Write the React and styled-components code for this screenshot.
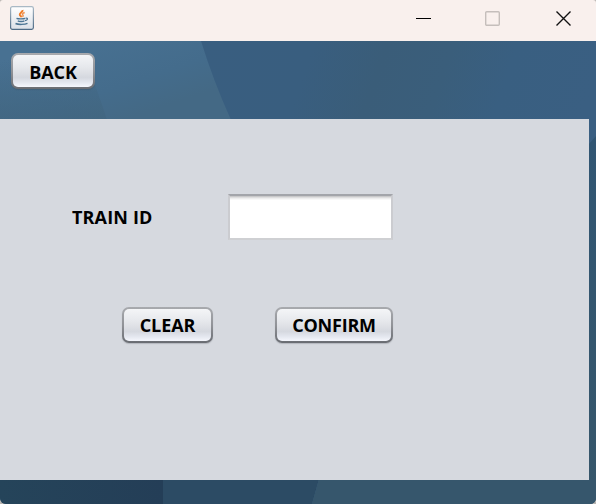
import React from 'react';
import styled, { createGlobalStyle } from 'styled-components';

const GlobalStyle = createGlobalStyle`
  html, body { margin: 0; overflow: hidden; background: #b9b6b2; }
  * { box-sizing: border-box; }
`;

const Window = styled.div`
  width: 596px;
  height: 504px;
  display: flex;
  flex-direction: column;
  overflow: hidden;
  border-radius: 3px 3px 6px 6px;
  font-family: 'Open Sans', 'Noto Sans', sans-serif;
  color: #000;
`;

const TitleBar = styled.header`
  height: 41px;
  flex: none;
  display: flex;
  justify-content: space-between;
  padding: 6px 24px 0 10px;
  background: #f9f0ed;
`;

const Controls = styled.div`
  display: grid;
  grid-template-columns: 69px 71px 16px;
  padding-top: 4px;
  svg { display: block; }
`;

const Desktop = styled.main`
  position: relative;
  flex: 1;
  display: flex;
  flex-direction: column;
  isolation: isolate;
`;

const Backdrop = styled.svg`
  position: absolute;
  inset: 0;
  z-index: -1;
`;

const Toolbar = styled.div`
  height: 78px;
  flex: none;
  padding: 12px 0 0 11px;
`;

const Panel = styled.section`
  width: 589px;
  height: 361px;
  padding: 75px 0 0 72px;
  background: #d6d9df;
`;

const FieldRow = styled.label`
  display: flex;
  align-items: center;
  height: 46px;
`;

const Caption = styled.span`
  width: 156px;
  font-size: 18px;
  font-weight: 700;
  line-height: 24px;
  letter-spacing: ${(p) => p.$spacing || '0'};
  white-space: nowrap;
`;

const TextField = styled.input`
  width: 165px;
  height: 46px;
  padding: 6px;
  outline: none;
  border: solid;
  border-width: 2px;
  border-color: #a3a5aa #cbccd0 #cfd0d3;
  border-radius: 0;
  background: linear-gradient(#c9c9ca 0 1px, #dededf 1px 2px, #eee 2px 3px, #f8f8f8 3px 4px, #fff 4px);
  font: inherit;
`;

const Actions = styled.div`
  display: flex;
  gap: 62px;
  padding: 67px 0 0 50px;
`;

const Button = styled.button`
  width: ${(p) => p.$width};
  height: 36px;
  display: flex;
  align-items: center;
  justify-content: center;
  padding: ${(p) => p.$drop || '0'} 0 0;
  border: 2px solid transparent;
  border-radius: 7px;
  background:
    linear-gradient(#f4f5f7, #e7e9ed 35%, #dfe1e6 53%, #d5d8df 70%, #e4e7ef 86%, #f5f7fd) padding-box,
    linear-gradient(#a8aaae, #919398 50%, #696c72) border-box;
  box-shadow: 0 1px 1px rgba(60, 65, 75, 0.22);
  font-family: inherit;
  font-size: 18px;
  font-weight: 700;
  line-height: 24px;
  letter-spacing: ${(p) => p.$spacing || '0'};
  color: #000;
`;

function JavaIcon() {
  return (
    <svg width="24" height="24" viewBox="0 0 24 24" fill="none">
      <defs>
        <linearGradient id="tile" x2="0" y2="1">
          <stop stopColor="#fff" />
          <stop offset="1" stopColor="#dce1e8" />
        </linearGradient>
        <linearGradient id="tileEdge" x2="0" y2="1">
          <stop stopColor="#a9b9c5" />
          <stop offset="1" stopColor="#4e6b86" />
        </linearGradient>
      </defs>
      <rect x=".6" y=".6" width="22.8" height="22.8" rx="1.8" fill="url(#tile)" stroke="url(#tileEdge)" strokeWidth="1.2" />
      <path d="M12.6 4c.4 2-3.2 2.900-2.800 4.700.3 1 1.300 1.300 1.300 2.500" stroke="#f07c26" strokeWidth="2" />
      <path d="M14.700 6.500c-2.600 1-2.600 1.700-1.700 2.700.5.7 0 1.300-.5 1.800" stroke="#ef9350" strokeWidth="1.500" />
      <path d="M6.500 12.300c1.500.7 7.500.6 8.700 0M7.800 14.800c1 .9 5.600.9 6.600 0M15.700 12.200c2.800-.5 2.100 2-.7 2.500" stroke="#4c7594" strokeWidth="1.300" />
      <path d="M5.500 17.500c2.500 1.200 9.500 1.200 12-.2" stroke="#4c7594" strokeWidth="1.500" />
    </svg>
  );
}

function WindowControls() {
  return (
    <Controls>
      <svg width="16" height="18" viewBox="0 0 16 18"><path d="M0 8.5h15" stroke="#000" /></svg>
      <svg width="16" height="18" viewBox="0 0 16 18"><rect x=".7" y="1.7" width="13.6" height="13.6" rx="1" fill="none" stroke="#c5bebb" strokeWidth="1.4" /></svg>
      <svg width="16" height="18" viewBox="0 0 16 18"><path d="M.5 1.5l14 14M14.5 1.5l-14 14" stroke="#111" strokeWidth="1.4" /></svg>
    </Controls>
  );
}

function DesktopArt() {
  return (
    <Backdrop width="596" height="463" viewBox="0 41 596 463">
      <defs>
        <linearGradient id="light" gradientUnits="userSpaceOnUse" x1="60" y1="41" x2="90" y2="131">
          <stop stopColor="#487192" />
          <stop offset=".65" stopColor="#446c8c" />
          <stop offset="1" stopColor="#446985" />
        </linearGradient>
        <linearGradient id="blue" gradientUnits="userSpaceOnUse" x1="200" y1="41" x2="568" y2="164">
          <stop stopColor="#395e80" />
          <stop offset=".28" stopColor="#395e7f" />
          <stop offset=".46" stopColor="#3a5d79" />
          <stop offset=".62" stopColor="#3a5e7b" />
          <stop offset=".78" stopColor="#395f81" />
          <stop offset="1" stopColor="#3a5f82" />
        </linearGradient>
        <linearGradient id="wedge" gradientUnits="userSpaceOnUse" x1="0" y1="60" x2="0" y2="120">
          <stop stopColor="#41657f" stopOpacity="0" />
          <stop offset="1" stopColor="#41657f" stopOpacity=".7" />
        </linearGradient>
        <linearGradient id="edge" x2="0" y2="1">
          <stop stopColor="#315673" />
          <stop offset="1" stopColor="#36566a" />
        </linearGradient>
        <linearGradient id="deep" x2="1" y2="0">
          <stop stopColor="#25445a" />
          <stop offset="1" stopColor="#243e57" />
        </linearGradient>
      </defs>
      <rect y="41" width="596" height="463" fill="url(#blue)" />
      <path d="M0 41H201Q213 80 231 120H0Z" fill="url(#light)" />
      <path d="M84 60Q98 90 107 120H0V60Z" fill="url(#wedge)" />
      <path d="M596 136L580 154V504H596Z" fill="url(#edge)" />
      <path d="M0 479H163V504H0Z" fill="url(#deep)" />
      <path d="M163 479H319L312 504H163Z" fill="#2c4b64" />
      <path d="M319 479H596V504H312Z" fill="#36566c" />
    </Backdrop>
  );
}

export default function App() {
  return (
    <>
      <GlobalStyle />
      <Window>
        <TitleBar>
          <JavaIcon />
          <WindowControls />
        </TitleBar>
        <Desktop>
          <DesktopArt />
          <Toolbar>
            <Button $width="84px" $spacing="-0.1px" $drop="2px">BACK</Button>
          </Toolbar>
          <Panel>
            <FieldRow>
              <Caption $spacing="0.15px">TRAIN ID</Caption>
              <TextField type="text" />
            </FieldRow>
            <Actions>
              <Button $width="91px" $spacing="-0.1px">CLEAR</Button>
              <Button $width="118px" $spacing="-0.2px">CONFIRM</Button>
            </Actions>
          </Panel>
        </Desktop>
      </Window>
    </>
  );
}
